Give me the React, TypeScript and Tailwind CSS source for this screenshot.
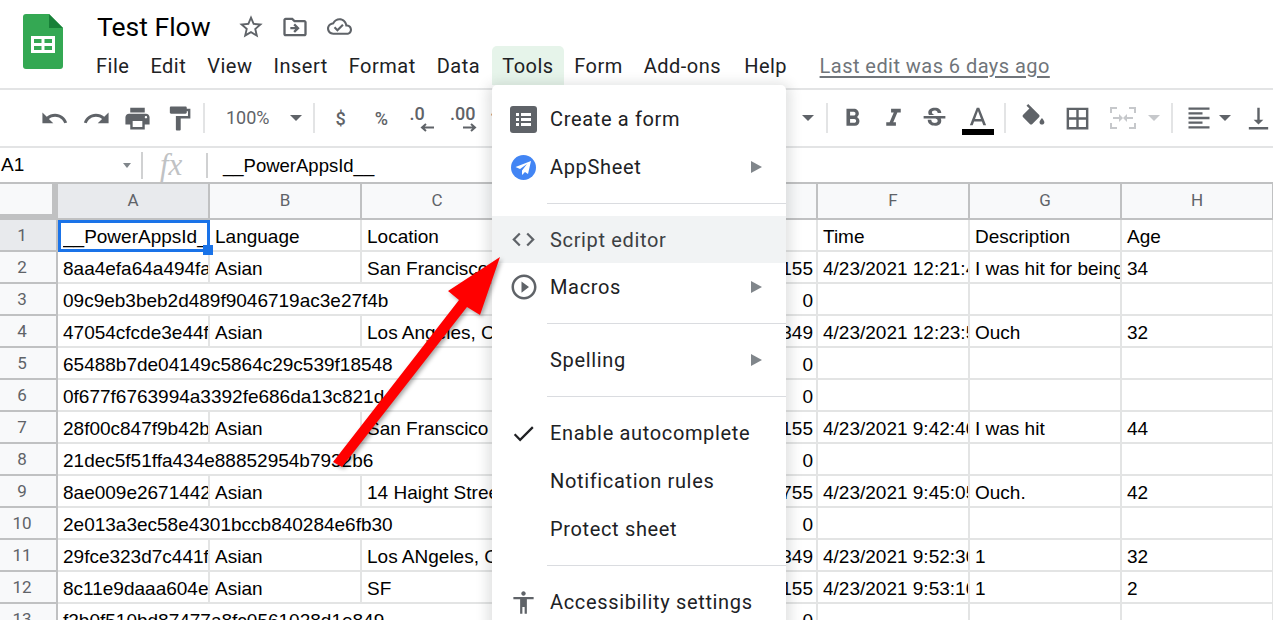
import React from 'react';

const GREY = '#5f6368';

const P: Record<string, string> = {
  undo: 'M12.5 8c-2.65 0-5.05.99-6.9 2.6L2 7v9h9l-3.62-3.62c1.39-1.16 3.16-1.88 5.12-1.88 3.54 0 6.55 2.31 7.6 5.5l2.37-.78C21.08 11.03 17.15 8 12.5 8z',
  redo: 'M18.4 10.6C16.55 8.99 14.15 8 11.5 8c-4.65 0-8.58 3.03-9.96 7.22L3.9 16c1.05-3.19 4.05-5.5 7.6-5.5 1.95 0 3.73.72 5.12 1.88L13 16h9V7l-3.6 3.6z',
  print: 'M19 8H5c-1.66 0-3 1.34-3 3v6h4v4h12v-4h4v-6c0-1.66-1.34-3-3-3zm-3 11H8v-5h8v5zm3-7c-.55 0-1-.45-1-1s.45-1 1-1 1 .45 1 1-.45 1-1 1zm-1-9H6v4h12V3z',
  paint: 'M18 4V3c0-.55-.45-1-1-1H5c-.55 0-1 .45-1 1v4c0 .55.45 1 1 1h12c.55 0 1-.45 1-1V6h1v4H9v11c0 .55.45 1 1 1h2c.55 0 1-.45 1-1v-9h8V4h-3z',
  bold: 'M15.6 10.79c.97-.67 1.65-1.77 1.65-2.79 0-2.26-1.75-4-4-4H7v14h7.04c2.09 0 3.71-1.7 3.71-3.79 0-1.52-.86-2.82-2.15-3.42zM10 6.5h3c.83 0 1.5.67 1.5 1.5s-.67 1.5-1.5 1.5h-3v-3zm3.5 9H10v-3h3.5c.83 0 1.5.67 1.5 1.5s-.67 1.5-1.5 1.5z',
  italic: 'M10 4v3h2.21l-3.42 8H6v3h8v-3h-2.21l3.42-8H18V4z',
  strike: 'M7.24 8.75c-.26-.48-.39-1.03-.39-1.67 0-.61.13-1.16.4-1.67.26-.5.63-.93 1.11-1.29.48-.35 1.05-.63 1.7-.83.66-.19 1.39-.29 2.18-.29.81 0 1.54.11 2.21.34.66.22 1.23.54 1.69.94.47.4.83.88 1.08 1.43.25.55.38 1.15.38 1.81h-3.01c0-.31-.05-.59-.15-.85-.09-.27-.24-.49-.44-.68-.2-.19-.45-.33-.75-.44-.3-.1-.66-.16-1.06-.16-.39 0-.74.04-1.03.13-.29.09-.53.21-.72.36-.19.16-.34.34-.44.55-.1.21-.15.43-.15.66 0 .48.25.88.74 1.21.38.25.77.48 1.41.7H7.39c-.05-.08-.11-.17-.15-.25zM21 12v-2H3v2h9.62c.18.07.4.14.55.2.37.17.66.34.87.51.21.17.35.36.43.57.07.2.11.43.11.69 0 .23-.05.45-.14.66-.09.2-.23.38-.42.53-.19.15-.42.26-.71.35-.29.08-.63.13-1.01.13-.43 0-.83-.04-1.18-.13s-.66-.23-.91-.42c-.25-.19-.45-.44-.59-.75-.14-.31-.25-.76-.25-1.21H6.4c0 .55.08 1.13.24 1.58.16.45.37.85.65 1.21.28.35.6.66.98.92.37.26.78.48 1.22.65.44.17.9.3 1.38.39.48.08.96.13 1.44.13.8 0 1.53-.09 2.18-.28s1.21-.45 1.67-.79c.46-.34.82-.77 1.07-1.27s.38-1.07.38-1.71c0-.6-.1-1.14-.31-1.61-.05-.11-.11-.23-.17-.33H21z',
  colorA: 'M11 3L5.5 17h2.25l1.12-3h6.25l1.12 3h2.25L13 3h-2zm-1.38 9L12 5.67 14.38 12H9.62z',
  fill: 'M16.56 8.94L7.62 0 6.21 1.41l2.38 2.38-5.15 5.15c-.59.59-.59 1.54 0 2.12l5.5 5.5c.29.29.68.44 1.06.44s.77-.15 1.06-.44l5.5-5.5c.59-.58.59-1.53 0-2.12zM19 11.5s-2 2.17-2 3.5c0 1.1.9 2 2 2s2-.9 2-2c0-1.33-2-3.5-2-3.5z',
  borders: 'M3 3v18h18V3H3zm8 16H5v-6h6v6zm0-8H5V5h6v6zm8 8h-6v-6h6v6zm0-8h-6V5h6v6z',
  align: 'M15 15H3v2h12v-2zm0-8H3v2h12V7zM3 13h18v-2H3v2zm0 8h18v-2H3v2zM3 3v2h18V3H3z',
  valign: 'M16 13h-3V3h-2v10H8l4 4 4-4zM4 19v2h16v-2H4z',
  star: 'M22 9.24l-7.19-.62L12 2 9.19 8.63 2 9.24l5.46 4.73L5.82 21 12 17.27 18.18 21l-1.63-7.03L22 9.24zM12 15.4l-3.76 2.27 1-4.28-3.32-2.88 4.38-.38L12 6.1l1.71 4.04 4.38.38-3.32 2.88 1 4.28L12 15.4z',
  folder: 'M20 6h-8l-2-2H4c-1.1 0-2 .9-2 2v12c0 1.1.9 2 2 2h16c1.1 0 2-.9 2-2V8c0-1.1-.9-2-2-2zm0 12H4V6h5.17l2 2H20v10zM12.16 12H8v2h4.16l-1.59 1.59L12 17l4-4-4-4-1.41 1.41z',
  cloud: 'M19.35 10.04C18.67 6.59 15.64 4 12 4 9.11 4 6.6 5.64 5.35 8.04 2.34 8.36 0 10.91 0 14c0 3.31 2.69 6 6 6h13c2.76 0 5-2.24 5-5 0-2.64-2.05-4.78-4.65-4.96zM19 18H6c-2.21 0-4-1.79-4-4 0-2.05 1.53-3.76 3.56-3.97l1.07-.11.5-.95C8.08 7.14 9.94 6 12 6c2.62 0 4.88 1.86 5.39 4.43l.3 1.5 1.53.11c1.56.1 2.78 1.41 2.78 2.96 0 1.65-1.35 3-3 3zm-9-3.82l-2.09-2.09L6.5 13.5 10 17l6.01-6.01-1.41-1.41z',
  code: 'M9.4 16.6L4.8 12l4.6-4.6L8 6l-6 6 6 6 1.4-1.4zm5.2 0l4.6-4.6-4.6-4.6L16 6l6 6-6 6-1.4-1.4z',
  play: 'M10 16.5l6-4.5-6-4.5v9zM12 2C6.48 2 2 6.48 2 12s4.48 10 10 10 10-4.48 10-10S17.52 2 12 2zm0 18c-4.41 0-8-3.59-8-8s3.59-8 8-8 8 3.59 8 8-3.59 8-8 8z',
  check: 'M9 16.17L4.83 12l-1.42 1.41L9 19 21 7l-1.41-1.41z',
  person: 'M12 2c1.1 0 2 .9 2 2s-.9 2-2 2-2-.9-2-2 .9-2 2-2zm9 7h-6v13h-2v-6h-2v6H9V9H3V7h18v2z',
};

const Icon = ({ name, size = 29, color = GREY }: { name: string; size?: number; color?: string }) => (
  <svg width={size} height={size} viewBox="0 0 24 24" fill={color} className="shrink-0">
    <path d={P[name]} />
  </svg>
);

const Caret = ({ color = GREY }: { color?: string }) => (
  <svg width="12" height="6" viewBox="0 0 12 6" fill={color} className="shrink-0">
    <path d="M0 0h12L6 6z" />
  </svg>
);

const Divider = ({ className = '' }: { className?: string }) => (
  <div className={`h-[30px] w-[2px] shrink-0 bg-[#e3e4e5] ${className}`} />
);

const Logo = () => (
  <svg width="40" height="55" viewBox="0 0 40 55" className="shrink-0">
    <path d="M3 0h23l14 14v38a3 3 0 0 1-3 3H3a3 3 0 0 1-3-3V3a3 3 0 0 1 3-3z" fill="#34a853" />
    <path d="M26 0l14 14H26z" fill="#188038" />
    <path d="M8 22h24v17H8z" fill="#fff" />
    <path d="M11 25h7.5v4H11zM21.5 25H29v4h-7.5zM11 32h7.5v4H11zM21.5 32H29v4h-7.5z" fill="#34a853" />
  </svg>
);

const MenuItem = ({ label, icon, sub, active }: { label: string; icon?: React.ReactNode; sub?: boolean; active?: boolean }) => (
  <div className={`flex items-center ${active ? 'h-[47px] bg-[#f1f3f4] text-[#3c4043]' : 'h-[48px] text-[#202124]'}`}>
    <div className="flex w-[58px] shrink-0 items-center justify-center pl-[5px]">{icon}</div>
    <span className="flex-1 text-[20px] tracking-[0.65px]">{label}</span>
    {sub && (
      <svg width="12" height="12" viewBox="0 0 12 12" fill="#80868b" className="mr-[23px]">
        <path d="M0 0l11 6-11 6z" />
      </svg>
    )}
  </div>
);

const MenuSep = () => (
  <div className="flex h-[25px] items-center pl-[55px]">
    <div className="h-[1px] w-full bg-[#dadce0]" />
  </div>
);

const ToolsMenu = () => (
  <div className="absolute left-[492px] top-[85px] z-20 h-[560px] w-[294px] rounded-[5px] bg-white pt-[10px] font-[Roboto] shadow-[0_3px_12px_5px_rgba(60,64,67,0.15)]">
    <MenuItem
      label="Create a form"
      icon={
        <svg width="27" height="27" viewBox="0 0 27 27">
          <rect width="27" height="27" rx="3" fill={GREY} />
          <path d="M6 7h3v3H6zM11 7h10v3H11zM6 12h3v3H6zM11 12h10v3H11zM6 17h3v3H6zM11 17h10v3H11z" fill="#fff" />
        </svg>
      }
    />
    <MenuItem
      label="AppSheet"
      sub
      icon={
        <svg width="25" height="25" viewBox="0 0 25 25">
          <circle cx="12.5" cy="12.5" r="12.5" fill="#4285f4" />
          <path d="M20 6L4.5 12l4.5 2 7-5-5 6.5V20l3-3 3 2z" fill="#fff" />
        </svg>
      }
    />
    <MenuSep />
    <MenuItem label="Script editor" active icon={<Icon name="code" size={27} />} />
    <MenuItem label="Macros" sub icon={<Icon name="play" size={30} />} />
    <MenuSep />
    <MenuItem label="Spelling" sub />
    <MenuSep />
    <MenuItem label="Enable autocomplete" icon={<Icon name="check" size={27} color="#202124" />} />
    <MenuItem label="Notification rules" />
    <MenuItem label="Protect sheet" />
    <MenuSep />
    <MenuItem label="Accessibility settings" icon={<Icon name="person" size={27} />} />
  </div>
);

const Arrow = () => (
  <svg width="1273" height="620" viewBox="0 0 1273 620" className="pointer-events-none absolute left-0 top-0 z-30">
    <path
      d="M500 257L448 291 459 300 333 462 342 467 467 307 480 315z"
      fill="#ff0000"
      className="drop-shadow-[2px_2px_2px_rgba(0,0,0,0.35)]"
    />
  </svg>
);

const menus = ['File', 'Edit', 'View', 'Insert', 'Format', 'Data'];

const Header = () => (
  <div className="flex h-[90px] border-b-2 border-[#e3e4e5] font-[Roboto]">
    <div className="w-[85.5px] shrink-0 pl-[23px] pt-[14px]">
      <Logo />
    </div>
    <div className="flex flex-col">
      <div className="flex h-[46px] items-center pl-[11.5px] pt-[7px]">
        <span className="w-[140px] text-[26.5px] text-[#000]">Test Flow</span>
        <Icon name="star" size={28} />
        <div className="ml-[16px]"><Icon name="folder" size={28} /></div>
        <div className="ml-[18px]"><Icon name="cloud" size={25} /></div>
      </div>
      <div className="flex h-[39px] items-center text-[20px] tracking-[0.5px] text-[#202124]">
        {menus.map((m) => (
          <span key={m} className="px-[10.5px]">{m}</span>
        ))}
        <span className="ml-[1.5px] flex h-full items-center rounded-t-[5px] bg-[#e6f4ea] px-[10px]">Tools</span>
        <span className="px-[10.5px]">Form</span>
        <span className="mr-[2px] px-[10.5px]">Add-ons</span>
        <span className="px-[10.5px]">Help</span>
        <span className="ml-[22px] tracking-[0.45px] text-[#70757a] underline underline-offset-[3px]">Last edit was 6 days ago</span>
      </div>
    </div>
  </div>
);

const Tool = ({ w, children }: { w: string; children: React.ReactNode }) => (
  <div className={`flex shrink-0 items-center justify-center ${w}`}>{children}</div>
);

const DecimalArrow = ({ d }: { d: string }) => (
  <svg width="16" height="9" viewBox="0 0 16 9" fill="none" stroke={GREY} strokeWidth="2">
    <path d={d} />
  </svg>
);

const MergeIcon = () => (
  <svg width="26" height="22" viewBox="0 0 26 22" fill="#c6c8cb" className="shrink-0">
    <path d="M0 0h7v2H0zM0 20h7v2H0zM19 0h7v2h-7zM19 20h7v2h-7zM0 0h2v6H0zM0 16h2v6H0zM24 0h2v6h-2zM24 16h2v6h-2zM3 10h6V7l4 4-4 4v-3H3zM23 10h-6V7l-4 4 4 4v-3h6z" />
  </svg>
);

const Toolbar = () => (
  <div className="flex h-[58px] items-center border-b-2 border-[#e3e4e5] font-[Roboto] text-[18px] text-[#5f6368]">
    <div className="flex w-[34px] shrink-0" />
    <Tool w="w-[41.5px]"><Icon name="undo" /></Tool>
    <Tool w="w-[41.5px]"><Icon name="redo" /></Tool>
    <Tool w="w-[41.5px]"><Icon name="print" /></Tool>
    <Tool w="w-[41.5px]"><Icon name="paint" /></Tool>
    <Divider className="ml-[3px]" />
    <span className="ml-[21px] w-[64px] shrink-0 -translate-y-[1px]">100%</span>
    <Caret />
    <Divider className="ml-[11px]" />
    <Tool w="w-[41px] ml-[5px]"><span className="font-medium">$</span></Tool>
    <Tool w="w-[41px]"><span className="font-medium">%</span></Tool>
    <Tool w="w-[41px]">
      <div className="flex flex-col leading-[18px]">
        <span className="font-medium">.0</span>
        <div className="ml-[10px] h-[9px]"><DecimalArrow d="M2 4.5h12M6 1L2 4.5 6 8" /></div>
      </div>
    </Tool>
    <Tool w="w-[41px]">
      <div className="flex flex-col leading-[18px]">
        <span className="font-medium">.00</span>
        <div className="ml-[11px] h-[9px]"><DecimalArrow d="M2 4.5h12M10 1l4 3.5L10 8" /></div>
      </div>
    </Tool>
    <span className="ml-[6px] w-[307px] shrink-0 font-medium">123</span>
    <Tool w="w-[22px]"><Caret /></Tool>
    <Divider className="ml-[7px]" />
    <Tool w="w-[40px] ml-[4px]"><Icon name="bold" /></Tool>
    <Tool w="w-[42px]"><Icon name="italic" /></Tool>
    <Tool w="w-[41px]"><Icon name="strike" /></Tool>
    <div className="flex w-[46px] shrink-0 translate-y-[1px] flex-col items-center">
      <div className="h-[25px] overflow-hidden"><Icon name="colorA" size={30} /></div>
      <div className="h-[6px] w-[32px] bg-black" />
    </div>
    <Divider className="ml-[3px]" />
    <Tool w="w-[42px] ml-[6px]"><Icon name="fill" /></Tool>
    <Tool w="w-[46px]"><Icon name="borders" /></Tool>
    <Tool w="w-[46px]"><MergeIcon /></Tool>
    <Tool w="w-[16px]"><Caret color="#c6c8cb" /></Tool>
    <Divider className="ml-[9px]" />
    <Tool w="w-[41px] ml-[5px]"><Icon name="align" size={28} /></Tool>
    <Tool w="w-[12px]"><Caret /></Tool>
    <Tool w="w-[54px]"><Icon name="valign" /></Tool>
  </div>
);

const FormulaBar = () => (
  <div className="flex h-[36px] items-center border-b-2 border-[#c0c1c2] font-['Liberation_Sans'] text-[19px] text-black">
    <span className="ml-[1px] w-[122px] shrink-0 pt-[1px]">A1</span>
    <svg width="8" height="5" viewBox="0 0 8 5" fill="#80868b" className="shrink-0">
      <path d="M0 0h8L4 5z" />
    </svg>
    <div className="ml-[10px] h-[27px] w-[2px] shrink-0 bg-[#d0d1d2]" />
    <span className="w-[63px] shrink-0 pl-[17px] font-['Liberation_Serif'] text-[31px] italic text-[#c0c2c4]">fx</span>
    <div className="h-[25px] w-[2px] shrink-0 bg-[#d0d1d2]" />
    <span className="ml-[15px] pt-[1px] text-[18.5px]">__PowerAppsId__</span>
  </div>
);

type Row = { a: string; wide?: boolean; b?: string; c?: string; e?: string; f?: string; g?: string; h?: string };

const rows: Row[] = [
  { a: '__PowerAppsId__', b: 'Language', c: 'Location', f: 'Time', g: 'Description', h: 'Age' },
  { a: '8aa4efa64a494fa3', b: 'Asian', c: 'San Francisco', e: '155', f: '4/23/2021 12:21:47', g: 'I was hit for being', h: '34' },
  { a: '09c9eb3beb2d489f9046719ac3e27f4b', wide: true, e: '0' },
  { a: '47054cfcde3e44f2', b: 'Asian', c: 'Los Angeles, CA', e: '349', f: '4/23/2021 12:23:53', g: 'Ouch', h: '32' },
  { a: '65488b7de04149c5864c29c539f18548', wide: true, e: '0' },
  { a: '0f677f6763994a3392fe686da13c821d', wide: true, e: '0' },
  { a: '28f00c847f9b42b3', b: 'Asian', c: 'San Franscico', e: '155', f: '4/23/2021 9:42:40', g: 'I was hit', h: '44' },
  { a: '21dec5f51ffa434e88852954b7932b6', wide: true, e: '0' },
  { a: '8ae009e2671442', b: 'Asian', c: '14 Haight Street', e: '755', f: '4/23/2021 9:45:05', g: 'Ouch.', h: '42' },
  { a: '2e013a3ec58e4301bccb840284e6fb30', wide: true, e: '0' },
  { a: '29fce323d7c441f2', b: 'Asian', c: 'Los ANgeles, CA', e: '349', f: '4/23/2021 9:52:30', g: '1', h: '32' },
  { a: '8c11e9daaa604e2', b: 'Asian', c: 'SF', e: '155', f: '4/23/2021 9:53:10', g: '1', h: '2' },
  { a: 'f2b0f510bd87477a8fc0561028d1e849', wide: true, e: '0' },
];

const cellBase = 'h-[32px] overflow-hidden whitespace-nowrap border-b-2 border-r-2 border-[#e3e4e4] pl-[5px] pr-[3px] leading-[34px]';

const Sheet = () => (
  <div className="grid grid-cols-[58px_repeat(8,152px)] font-['Liberation_Sans'] text-[19px] text-black">
    <div className="h-[36px] border-b-[6px] border-r-[6px] border-[#c0c1c2] bg-[#f8f9fa]" />
    {['A', 'B', 'C', 'D', 'E', 'F', 'G', 'H'].map((col) => (
      <div
        key={col}
        className={`flex h-[36px] items-center justify-center border-b-2 border-r-2 border-[#c0c1c2] font-[Roboto] text-[17px] text-[#5f6368] ${col === 'A' ? 'bg-[#e8eaed]' : 'bg-[#f8f9fa]'}`}
      >
        {col}
      </div>
    ))}
    {rows.map((r, i) => (
      <React.Fragment key={i}>
        <div
          className={`flex h-[32px] items-center justify-center border-b-2 border-r-2 border-[#c0c1c2] pr-[12px] pt-[2px] font-[Roboto] text-[17px] text-[#5f6368] ${i === 0 ? 'bg-[#e8eaed]' : 'bg-[#f8f9fa]'}`}
        >
          {i + 1}
        </div>
        {r.wide ? (
          <div className={`${cellBase} col-span-3`}>{r.a}</div>
        ) : (
          <>
            <div className={`${cellBase} relative overflow-visible`}>
              <div className="-mr-[3px] overflow-hidden">{r.a}</div>
              {i === 0 && (
                <>
                  <div className="absolute -bottom-[2px] -right-[2px] left-0 top-0 border-[3px] border-[#1a73e8]" />
                  <div className="absolute -bottom-[5px] -right-[5px] z-10 h-[10px] w-[10px] bg-[#1a73e8]" />
                </>
              )}
            </div>
            <div className={cellBase}>{r.b}</div>
            <div className={cellBase}>{r.c}</div>
          </>
        )}
        <div className={cellBase} />
        <div className={`${cellBase} text-right`}>{r.e}</div>
        <div className={cellBase}>{r.f}</div>
        <div className={cellBase}>{r.g}</div>
        <div className={cellBase}>{r.h}</div>
      </React.Fragment>
    ))}
  </div>
);

const App: React.FC = () => (
  <div className="relative h-[620px] w-[1273px] overflow-hidden bg-white">
    <Header />
    <Toolbar />
    <FormulaBar />
    <Sheet />
    <ToolsMenu />
    <Arrow />
  </div>
);

export default App;
